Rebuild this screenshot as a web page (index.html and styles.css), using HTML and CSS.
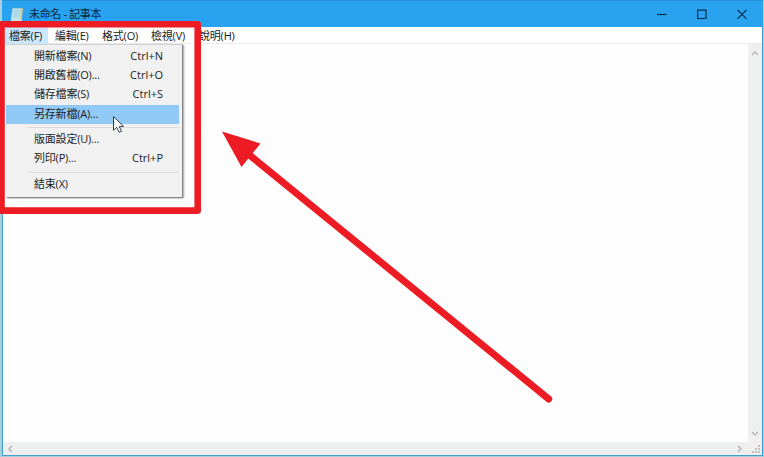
FILE: index.html
```html
<!DOCTYPE html>
<html lang="zh-Hant">
<head>
<meta charset="utf-8">
<title>未命名 - 記事本</title>
<link rel="stylesheet" href="styles.css">
</head>
<body>
<div class="window">
  <header class="titlebar">
    <svg class="app-icon" width="14" height="16" viewBox="0 0 14 16">
      <path d="M2.5 2h10l-1 12.500H.8z" fill="#b9e2ed"/>
      <path d="M10.800 2h2l-1 12.500H9.700z" fill="#d5c894"/>
      <path d="M2.500 2h10" stroke="#6198ac" stroke-dasharray="1 1"/>
      <path d="M3.500 5h6M3.300 7.500h6M3 10h6" stroke="#8bc5d6" stroke-width=".7"/>
      <path d="M.8 14.300h10.700" stroke="#e7f3ef"/>
    </svg>
    <span class="title">未命名 - 記事本</span>
    <div class="controls">
      <svg width="10" height="10" viewBox="0 0 10 10"><path d="M0 5.500h9.500"/></svg>
      <svg width="10" height="10" viewBox="0 0 10 10"><path d="M.7 1.200h8.300v8.300H.7z"/></svg>
      <svg width="10" height="10" viewBox="0 0 10 10"><path d="M.5 .8l9 9M9.500 .8l-9 9"/></svg>
    </div>
  </header>
  <nav class="menubar">
    <span class="menu-name file open">檔案(F)</span>
    <span class="menu-name edit">編輯(E)</span>
    <span class="menu-name format">格式(O)</span>
    <span class="menu-name view">檢視(V)</span>
    <span class="menu-name help">說明(H)</span>
  </nav>
  <main class="editor">
    <div class="text-area"></div>
    <div class="vscroll">
      <svg width="8" height="6" viewBox="0 0 8 6"><path d="M1 5l3-3 3 3"/></svg>
      <svg width="8" height="6" viewBox="0 0 8 6"><path d="M1 1l3 3 3-3"/></svg>
    </div>
    <div class="hscroll">
      <svg width="6" height="8" viewBox="0 0 6 8"><path d="M5 1L2 4l3 3"/></svg>
      <svg width="6" height="8" viewBox="0 0 6 8"><path d="M1 1l3 3-3 3"/></svg>
    </div>
    <div class="grip">
      <svg width="9" height="9" viewBox="0 0 9 9"><path d="M6 0h2v2H6zM3 3h2v2H3zM6 3h2v2H6zM0 6h2v2H0zM3 6h2v2H3zM6 6h2v2H6z" fill="#c3bfbd"/></svg>
    </div>
  </main>
</div>

<div class="dropdown">
  <div class="item"><span>開新檔案(N)</span><span class="key">Ctrl+N</span></div>
  <div class="item"><span>開啟舊檔(O)...</span><span class="key">Ctrl+O</span></div>
  <div class="item"><span>儲存檔案(S)</span><span class="key">Ctrl+S</span></div>
  <div class="item active"><span>另存新檔(A)...</span></div>
  <div class="separator"></div>
  <div class="item"><span>版面設定(U)...</span></div>
  <div class="item"><span>列印(P)...</span><span class="key">Ctrl+P</span></div>
  <div class="separator"></div>
  <div class="item"><span>結束(X)</span></div>
</div>

<svg class="overlay" width="764" height="457" viewBox="0 0 764 457">
  <path d="M113.500 116.500v13.800l3.200-3 2.500 5 2.300-1.100-2.300-4.800h4.400z" fill="#fff" stroke="#333d4a" stroke-width="1"/>
  <rect x="1.500" y="24.300" width="196.200" height="186.300" fill="none" stroke="#ed1c24" stroke-width="6.600" stroke-linejoin="round"/>
  <path d="M247 153L548.700 399" stroke="#ed1c24" stroke-width="7" stroke-linecap="round"/>
  <path d="M222 131.500L260.500 143.500L241.500 167z" fill="#ed1c24"/>
</svg>
</body>
</html>
```

FILE: styles.css
```css
* { box-sizing: border-box; }

body {
  margin: 0;
  width: 764px;
  height: 457px;
  overflow: hidden;
  position: relative;
  background: #a9cfdf;
  color: #1c1c1c;
  font: 11px/16px "Open Sans", "Noto Sans CJK TC", sans-serif;
  letter-spacing: -0.2px;
  white-space: nowrap;
}

svg { display: block; flex: none; }

.window {
  display: flex;
  flex-direction: column;
  height: 456px;
  margin: 0 1px 0 2px;
  border: solid #429fcb;
  border-width: 0 1px 1px;
  background: #fff;
}

.titlebar {
  display: flex;
  align-items: center;
  height: 27px;
  margin: 0 -1px;
  padding: 0 16px 0 8px;
  background: #29a3ef;
  border-top: 1px solid #2592d6;
  color: #08263b;
}

.title {
  margin-left: 5px;
  letter-spacing: -0.35px;
}

.controls {
  display: flex;
  gap: 30px;
  margin-left: auto;
}

.controls path {
  fill: none;
  stroke: #0b2d46;
  stroke-width: 1.2;
}

.menubar {
  display: flex;
  height: 17px;
  padding-left: 2px;
  border-bottom: 1px solid #ececec;
}

.menu-name {
  height: 17px;
  padding-left: 4px;
  line-height: 17px;
}

.file { width: 43px; }
.edit { width: 47px; padding-left: 7px; }
.format { width: 49px; padding-left: 7px; }
.view { width: 49px; padding-left: 7px; }
.help { padding-left: 6px; }
.open { background: #cce8ff; }

.editor {
  flex: 1;
  display: grid;
  grid-template: 1fr 13px / 1fr 14px;
}

.text-area { background: #fefefe; }

.vscroll, .hscroll {
  display: flex;
  justify-content: space-between;
  background: #eeeff0;
}

.vscroll {
  flex-direction: column;
  align-items: center;
  padding: 6px 0 5px;
}

.hscroll {
  align-items: center;
  padding: 0 5px 0 4px;
}

.vscroll path, .hscroll path {
  fill: none;
  stroke: #b7b7b7;
  stroke-width: 1.5;
}

.grip {
  display: flex;
  justify-content: flex-end;
  align-items: flex-end;
  padding: 0 1px 1px 0;
  background: #f0efed;
}

.dropdown {
  position: absolute;
  left: 6px;
  top: 44px;
  width: 176px;
  height: 153px;
  padding: 1.5px 3px 0 0;
  border-top: 1px solid #d2d2d2;
  background: #f1f1f1;
  box-shadow: 1px 1px 1px #888, 2px 1px 2px #aaa;
}

.item {
  display: flex;
  height: 19.4px;
  padding: 0 16px 0 28px;
  line-height: 18px;
}

.active { background: #91c9f7; }

.key {
  margin-left: auto;
  letter-spacing: 0;
}

.separator {
  height: 6px;
  margin-left: 22px;
  background: linear-gradient(#dcdcdc, #dcdcdc) 0 3px / 100% 1px no-repeat;
}

.overlay {
  position: absolute;
  left: 0;
  top: 0;
}
```
